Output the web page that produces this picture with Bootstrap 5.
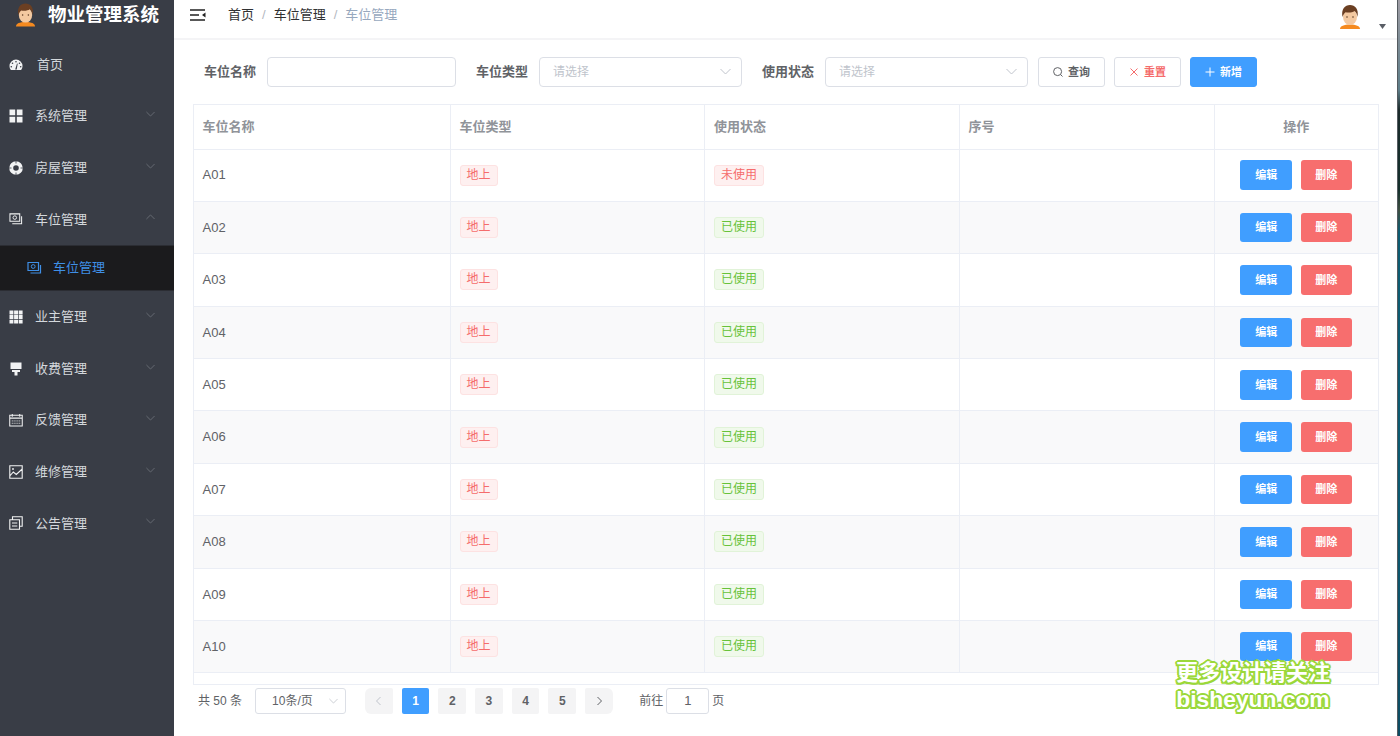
<!DOCTYPE html>
<html lang="zh-CN">
<head>
<meta charset="utf-8">
<title>物业管理系统</title>
<link rel="stylesheet" href="https://cdn.jsdelivr.net/npm/bootstrap@5.3.0/dist/css/bootstrap.min.css">
<style>
html,body{height:100%;overflow:hidden}
body{font-family:"Liberation Sans","Noto Sans CJK SC",sans-serif;font-size:13px;color:#606266;background:#fff}
.shell{height:736px}
.side{width:174px;flex:none;background:#393d46;color:#d4d8dc;position:relative}
.brand{height:30px;margin-bottom:8.8px;padding-left:15px;gap:12px;color:#fff;font-size:18.5px;font-weight:700;white-space:nowrap}
.brand svg{width:21px;height:25px;margin-top:-1px}
.side-link{height:51.6px;padding:0 19px 0 9px;color:#d4d8dc;font-size:13px;text-decoration:none}
.side-link:hover,.side-link:focus{color:#d4d8dc}
.side-link .ic{width:14px;height:14px;flex:none;margin-right:12px;color:#f2f3f4}
.side-link .arrow{width:9px;height:6px;margin-left:auto;margin-top:-4px;color:#6f747c}
.home-link .ic{margin-right:14px}
.sub-link{height:46px;background:#1b1b1d;padding-left:27px;color:#3f8fe6;border-top:1px solid #2b2d33;border-bottom:1px solid #2b2d33}
.sub-link:hover,.sub-link:focus{color:#3f8fe6}
.sub-link .ic{width:15px;height:14px;margin-right:11px;color:#3f8fe6}
.work{flex:1 1 auto;min-width:0;position:relative}
.edge{width:3px;flex:none;border-left:1px solid #555b60;background:linear-gradient(#a09ea6 0,#7f8d96 40px,#5d7d88 90px,#1b2b2b 110px,#14302c 190px,#3d4f42 210px,#0d5c72 232px,#0c5a72 500px,#0d4c63 736px)}
.topbar{height:40px;border-bottom:2px solid #f4f4f6;padding-left:16px;padding-right:11px}
.fold{width:16px;height:12px;margin-top:-8px}
.crumbs{margin:-8px 0 0 22px;--bs-breadcrumb-margin-bottom:0;--bs-breadcrumb-divider-color:#b3b8bf;--bs-breadcrumb-item-padding-x:8px;font-size:13px}
.crumbs .breadcrumb-item{color:#303133}
.crumbs .breadcrumb-item.active{color:#97a8be}
.who{margin-left:auto;margin-top:-6px}
.who svg.face{width:22px;height:25px}
.who .caret-ic{width:7px;height:5px;margin-left:18px;margin-top:20px}
.filters{padding:17px 0 0 30px;height:64px}
.filters label{font-size:13px;font-weight:700;color:#606266;white-space:nowrap;margin:0;line-height:29.5px}
.name-in{width:189px;height:29.5px;margin:0 20px 0 11px;border:1px solid #dcdfe6;border-radius:4px}
.pick{width:203px;height:29.5px;margin:0 20px 0 11px;padding:1px 13px 0;font-size:12px;color:#c0c4cc;border:1px solid #dcdfe6;border-radius:4px;background-size:11px 7px;background-position:right 10px center;background-image:url("data:image/svg+xml,%3Csvg xmlns='http://www.w3.org/2000/svg' viewBox='0 0 11 7'%3E%3Cpath d='M.5 1l5 5 5-5' fill='none' stroke='%23c0c4cc'/%3E%3C/svg%3E")}
.pick:last-of-type{margin-right:0}
.act{height:30px;width:67px;padding:0;font-size:11px;font-weight:700;border-radius:3px;gap:5px}
.act svg{width:10px;height:10px}
.act-plain{background:#fff;border:1px solid #dcdfe6;color:#606266}
.act-reset{background:#fff;border:1px solid #dcdfe6;color:#f56c6c}
.act-add{background:#409eff;border:1px solid #409eff;color:#fff}
.act-gap{gap:9px;margin-left:10px}
.grid-wrap{margin:0 18px 0 18.5px;height:581px;border:1px solid #ebeef5;border-top:0}
.lots{table-layout:fixed;width:100%;margin:0;border-collapse:collapse;--bs-table-border-color:#ebeef5;--bs-table-bg:#fff;font-size:13px}
.lots>*>tr>*{border:1px solid #ebeef5;padding:0 9px;vertical-align:middle;color:#606266}
.lots>*>tr>*:first-child{border-left:0}
.lots>*>tr>*:last-child{border-right:0}
.lots tbody tr:nth-child(even)>td{background:#f9f9fa}
.lots thead tr{height:44.5px}
.lots thead th{font-weight:700;color:#909399;font-size:13px}
.lots tbody tr{height:52.4px}
.tag-red,.tag-green{display:inline-block;height:21px;line-height:19px;padding:0 6px;font-size:12px;border-radius:3px;font-weight:400}
.tag-red{background:#fef0f0;border:1px solid #fde2e2;color:#f56c6c}
.tag-green{background:#f0f9eb;border:1px solid #e1f3d8;color:#67c23a}
.row-btn{width:51.5px;height:29.5px;padding:0;font-size:11px;font-weight:700;border-radius:3px;border:0;color:#fff}
.row-btn:hover{color:#fff}
.btn-edit{background:#409eff}
.btn-edit:hover{background:#409eff}
.btn-del{background:#f76e6e;margin-left:5px}
.btn-del:hover{background:#f76e6e}
.pager-row{padding:1px 0 0 24px;height:30px;font-size:12px;color:#606266}
.size-pick{width:91px;height:26px;margin:0 19px 0 13px;padding:0 0 0 16px;font-size:12px;color:#606266;border:1px solid #dcdfe6;border-radius:3px;background-size:9px 6px;background-position:right 7px center;background-image:url("data:image/svg+xml,%3Csvg xmlns='http://www.w3.org/2000/svg' viewBox='0 0 11 7'%3E%3Cpath d='M.5 1l5 5 5-5' fill='none' stroke='%23c0c4cc'/%3E%3C/svg%3E")}
.pages{gap:9px;margin:0}
.pages .page-link{width:27.7px;height:26px;padding:0;display:flex;align-items:center;justify-content:center;background:#f4f4f5;border:0;color:#606266;border-radius:2px;font-size:12px;font-weight:700;margin:0!important}
.pages .page-item.active .page-link{background:#409eff;color:#fff}
.pages .page-item.disabled .page-link{color:#c0c4cc}
.pages svg{width:7px;height:10px}
.jump{margin-left:26.5px;gap:3px}
.jump input{width:43px;height:26px;padding:0;text-align:center;font-size:13px;color:#606266;border:1px solid #dcdfe6;border-radius:3px}
.promo{position:absolute;right:67px;top:659px;text-align:center;color:#fff;font-weight:700;pointer-events:none;white-space:nowrap;text-shadow:2px 0 0 #9bd83a,-2px 0 0 #9bd83a,0 2px 0 #9bd83a,0 -2px 0 #9bd83a,1.5px 1.5px 0 #9bd83a,-1.5px 1.5px 0 #9bd83a,1.5px -1.5px 0 #9bd83a,-1.5px -1.5px 0 #9bd83a}
.promo span{display:block}
.promo .l1{font-size:22px;height:28px;line-height:28px}
.promo .l2{font-size:22.8px;height:25px;line-height:25px}
</style>
</head>
<body>
<div class="d-flex shell">
  <aside class="side d-flex flex-column">
    <div class="brand d-flex align-items-center">
      <svg viewBox="0 0 22 25"><path d="M1 25c0-3 4-4.600 10-4.600S21 22 21 25z" fill="#f58a1f"/><ellipse cx="11" cy="13" rx="7" ry="8" fill="#f4c9a0"/><path d="M3.500 13C2 5 6 1 11 1s9 4 7.500 12c-.5-3-1.500-5-3-6-2 1.500-6 2-9 1.200C5 9.500 4 11 3.500 13z" fill="#6b3f22"/><circle cx="8" cy="13" r=".8" fill="#5a3a22"/><circle cx="14" cy="13" r=".8" fill="#5a3a22"/></svg>
      <span>物业管理系统</span>
    </div>
    <nav class="nav flex-column">
      <a class="nav-link side-link home-link d-flex align-items-center" href="#"><svg class="ic" viewBox="0 0 14 14"><path fill="currentColor" fill-rule="evenodd" d="M7 1.500A6.500 6.500 0 0 0 .5 8c0 1.500.5 2.900 1.400 4h10.200c.9-1.100 1.400-2.500 1.400-4A6.500 6.500 0 0 0 7 1.500zM7 3a.8.8 0 1 1 0 1.600A.8.8 0 0 1 7 3zM3.500 4.500a.8.8 0 1 1 0 1.600.8.8 0 0 1 0-1.600zM10.500 4.500a.8.8 0 1 1 0 1.600.8.8 0 0 1 0-1.600zM2.300 8a.8.8 0 1 1 0 1.600.8.8 0 0 1 0-1.600zM11.700 8a.8.8 0 1 1 0 1.600.8.8 0 0 1 0-1.600zM6.200 11.500L8 5.500l.7.200-1 5.800z"/></svg><span>首页</span></a>
      <a class="nav-link side-link d-flex align-items-center" href="#"><svg class="ic" viewBox="0 0 14 14"><path fill="currentColor" d="M.5.500h5.700v5.700H.5zM7.800.500h5.700v5.700H7.800zM.5 7.800h5.700v5.700H.5zM7.800 7.800h5.700v5.700H7.800z"/></svg><span>系统管理</span><svg class="arrow" viewBox="0 0 11 7"><path d="M.5 1l5 5 5-5" fill="none" stroke="currentColor"/></svg></a>
      <a class="nav-link side-link d-flex align-items-center" href="#"><svg class="ic" viewBox="0 0 14 14"><circle cx="7" cy="7" r="4.800" fill="none" stroke="currentColor" stroke-width="4"/><path d="M7 0v2.500M7 11.500V14M0 7h2.500M11.500 7H14" stroke="#393d46" stroke-width=".8"/></svg><span>房屋管理</span><svg class="arrow" viewBox="0 0 11 7"><path d="M.5 1l5 5 5-5" fill="none" stroke="currentColor"/></svg></a>
      <a class="nav-link side-link d-flex align-items-center" href="#"><svg class="ic" viewBox="0 0 15 14"><path fill="none" stroke="currentColor" stroke-width="1.100" d="M1 1.500h10.500v8H1z"/><circle cx="6.200" cy="5.500" r="1.900" fill="none" stroke="currentColor"/><path fill="none" stroke="currentColor" stroke-width="1.100" d="M13.500 4v8H3.500"/></svg><span>车位管理</span><svg class="arrow" viewBox="0 0 11 7"><path d="M.5 6l5-5 5 5" fill="none" stroke="currentColor"/></svg></a>
      <a class="nav-link side-link sub-link d-flex align-items-center" href="#"><svg class="ic" viewBox="0 0 15 14"><path fill="none" stroke="currentColor" stroke-width="1.200" d="M1 1.500h10.500v8H1z"/><circle cx="6.200" cy="5.500" r="1.900" fill="none" stroke="currentColor"/><path fill="none" stroke="currentColor" stroke-width="1.200" d="M13.500 4v8H3.500"/></svg><span>车位管理</span></a>
      <a class="nav-link side-link d-flex align-items-center" href="#"><svg class="ic" viewBox="0 0 14 14"><path fill="currentColor" d="M.5.500h3.900v3.900H.5zM5.100.500H9v3.900H5.100zM9.700.500h3.900v3.900H9.700zM.5 5.100h3.900V9H.5zM5.100 5.100H9V9H5.100zM9.700 5.100h3.900V9H9.700zM.5 9.700h3.900v3.900H.5zM5.100 9.700H9v3.900H5.100zM9.700 9.700h3.900v3.900H9.700z"/></svg><span>业主管理</span><svg class="arrow" viewBox="0 0 11 7"><path d="M.5 1l5 5 5-5" fill="none" stroke="currentColor"/></svg></a>
      <a class="nav-link side-link d-flex align-items-center" href="#"><svg class="ic" viewBox="0 0 14 14"><path fill="currentColor" d="M1.500.5h11v6.500h-11zM3 8h8v2H8.500v3.500h-3V10H3z"/></svg><span>收费管理</span><svg class="arrow" viewBox="0 0 11 7"><path d="M.5 1l5 5 5-5" fill="none" stroke="currentColor"/></svg></a>
      <a class="nav-link side-link d-flex align-items-center" href="#"><svg class="ic" viewBox="0 0 15 14"><path fill="none" stroke="currentColor" stroke-width="1.100" d="M.8 2h13.400v11.400H.8zM.8 5h13.400M3.500.5v3M11.500.5v3"/><path stroke="currentColor" stroke-dasharray="1 1" d="M3 8h9M3 10.500h9"/></svg><span>反馈管理</span><svg class="arrow" viewBox="0 0 11 7"><path d="M.5 1l5 5 5-5" fill="none" stroke="currentColor"/></svg></a>
      <a class="nav-link side-link d-flex align-items-center" href="#"><svg class="ic" viewBox="0 0 14 14"><path fill="none" stroke="currentColor" stroke-width="1.100" d="M.8.800h12.400v12.400H.8zM.8 11l3.500-4 3 2.500 5.900-5.500"/><circle cx="4" cy="4" r=".9" fill="currentColor"/></svg><span>维修管理</span><svg class="arrow" viewBox="0 0 11 7"><path d="M.5 1l5 5 5-5" fill="none" stroke="currentColor"/></svg></a>
      <a class="nav-link side-link d-flex align-items-center" href="#"><svg class="ic" viewBox="0 0 14 14"><path fill="none" stroke="currentColor" stroke-width="1.100" d="M.8 3.800h9.700v9.500H.8zM3.500 3.800V.8h9.700v9.500h-2.700M3 7h5.300M3 10h5.300"/></svg><span>公告管理</span><svg class="arrow" viewBox="0 0 11 7"><path d="M.5 1l5 5 5-5" fill="none" stroke="currentColor"/></svg></a>
    </nav>
  </aside>
  <main class="work">
    <header class="topbar d-flex align-items-center">
      <svg class="fold" viewBox="0 0 16 12"><path d="M0 1h15M0 6h9M0 11h15" stroke="#222" stroke-width="1.600"/><path d="M15.500 3.500L12 6l3.500 2.500z" fill="#222"/></svg>
      <ol class="breadcrumb crumbs">
        <li class="breadcrumb-item">首页</li>
        <li class="breadcrumb-item">车位管理</li>
        <li class="breadcrumb-item active">车位管理</li>
      </ol>
      <div class="who d-flex align-items-center">
        <svg class="face" viewBox="0 0 22 25"><path d="M1 25c0-3 4-4.600 10-4.600S21 22 21 25z" fill="#f58a1f"/><ellipse cx="11" cy="13" rx="7" ry="8" fill="#f4c9a0"/><path d="M3.500 13C2 5 6 1 11 1s9 4 7.500 12c-.5-3-1.500-5-3-6-2 1.500-6 2-9 1.200C5 9.500 4 11 3.500 13z" fill="#6b3f22"/><circle cx="8" cy="13" r=".8" fill="#5a3a22"/><circle cx="14" cy="13" r=".8" fill="#5a3a22"/></svg>
        <svg class="caret-ic" viewBox="0 0 7 5"><path d="M0 0h7L3.500 5z" fill="#5a5e66"/></svg>
      </div>
    </header>
    <form class="filters d-flex align-items-start">
      <label>车位名称</label><input class="form-control name-in" type="text">
      <label>车位类型</label><select class="form-select pick"><option>请选择</option></select>
      <label>使用状态</label><select class="form-select pick"><option>请选择</option></select>
      <div class="d-flex act-gap">
        <button type="button" class="btn act act-plain d-flex align-items-center justify-content-center"><svg viewBox="0 0 10 10"><circle cx="4.600" cy="4.600" r="4" fill="none" stroke="#606266"/><path d="M7.500 7.500L9.500 9.500" stroke="#606266"/></svg>查询</button>
        <button type="button" class="btn act act-reset d-flex align-items-center justify-content-center"><svg viewBox="0 0 10 10"><path d="M1.500 1.500l7 7M8.500 1.500l-7 7" stroke="#f56c6c"/></svg>重置</button>
        <button type="button" class="btn act act-add d-flex align-items-center justify-content-center"><svg viewBox="0 0 10 10"><path d="M5 .5v9M.5 5h9" stroke="#fff"/></svg>新增</button>
      </div>
    </form>
    <div class="grid-wrap">
      <table class="table lots">
        <colgroup><col style="width:256.500px"><col style="width:254.500px"><col style="width:254.500px"><col style="width:255px"><col></colgroup>
        <thead><tr><th>车位名称</th><th>车位类型</th><th>使用状态</th><th>序号</th><th class="text-center">操作</th></tr></thead>
        <tbody>
          <tr><td>A01</td><td><span class="tag-red">地上</span></td><td><span class="tag-red">未使用</span></td><td></td><td class="text-center"><button type="button" class="btn row-btn btn-edit">编辑</button> <button type="button" class="btn row-btn btn-del">删除</button></td></tr>
          <tr><td>A02</td><td><span class="tag-red">地上</span></td><td><span class="tag-green">已使用</span></td><td></td><td class="text-center"><button type="button" class="btn row-btn btn-edit">编辑</button> <button type="button" class="btn row-btn btn-del">删除</button></td></tr>
          <tr><td>A03</td><td><span class="tag-red">地上</span></td><td><span class="tag-green">已使用</span></td><td></td><td class="text-center"><button type="button" class="btn row-btn btn-edit">编辑</button> <button type="button" class="btn row-btn btn-del">删除</button></td></tr>
          <tr><td>A04</td><td><span class="tag-red">地上</span></td><td><span class="tag-green">已使用</span></td><td></td><td class="text-center"><button type="button" class="btn row-btn btn-edit">编辑</button> <button type="button" class="btn row-btn btn-del">删除</button></td></tr>
          <tr><td>A05</td><td><span class="tag-red">地上</span></td><td><span class="tag-green">已使用</span></td><td></td><td class="text-center"><button type="button" class="btn row-btn btn-edit">编辑</button> <button type="button" class="btn row-btn btn-del">删除</button></td></tr>
          <tr><td>A06</td><td><span class="tag-red">地上</span></td><td><span class="tag-green">已使用</span></td><td></td><td class="text-center"><button type="button" class="btn row-btn btn-edit">编辑</button> <button type="button" class="btn row-btn btn-del">删除</button></td></tr>
          <tr><td>A07</td><td><span class="tag-red">地上</span></td><td><span class="tag-green">已使用</span></td><td></td><td class="text-center"><button type="button" class="btn row-btn btn-edit">编辑</button> <button type="button" class="btn row-btn btn-del">删除</button></td></tr>
          <tr><td>A08</td><td><span class="tag-red">地上</span></td><td><span class="tag-green">已使用</span></td><td></td><td class="text-center"><button type="button" class="btn row-btn btn-edit">编辑</button> <button type="button" class="btn row-btn btn-del">删除</button></td></tr>
          <tr><td>A09</td><td><span class="tag-red">地上</span></td><td><span class="tag-green">已使用</span></td><td></td><td class="text-center"><button type="button" class="btn row-btn btn-edit">编辑</button> <button type="button" class="btn row-btn btn-del">删除</button></td></tr>
          <tr><td>A10</td><td><span class="tag-red">地上</span></td><td><span class="tag-green">已使用</span></td><td></td><td class="text-center"><button type="button" class="btn row-btn btn-edit">编辑</button> <button type="button" class="btn row-btn btn-del">删除</button></td></tr>
        </tbody>
      </table>
    </div>
    <div class="pager-row d-flex align-items-center">
      <span>共 50 条</span>
      <select class="form-select size-pick"><option>10条/页</option></select>
      <ul class="pagination pages">
        <li class="page-item disabled"><a class="page-link" href="#"><svg viewBox="0 0 7 10"><path d="M5.500 1l-4 4 4 4" fill="none" stroke="currentColor"/></svg></a></li>
        <li class="page-item active"><a class="page-link" href="#">1</a></li>
        <li class="page-item"><a class="page-link" href="#">2</a></li>
        <li class="page-item"><a class="page-link" href="#">3</a></li>
        <li class="page-item"><a class="page-link" href="#">4</a></li>
        <li class="page-item"><a class="page-link" href="#">5</a></li>
        <li class="page-item"><a class="page-link" href="#"><svg viewBox="0 0 7 10"><path d="M1.500 1l4 4-4 4" fill="none" stroke="currentColor"/></svg></a></li>
      </ul>
      <div class="jump d-flex align-items-center"><span>前往</span><input class="form-control" type="text" value="1"><span>页</span></div>
    </div>
    <div class="promo"><span class="l1">更多设计请关注</span><span class="l2">bisheyun.com</span></div>
  </main>
  <div class="edge"></div>
</div>
<script src="https://cdn.jsdelivr.net/npm/bootstrap@5.3.0/dist/js/bootstrap.bundle.min.js"></script>
</body>
</html>
